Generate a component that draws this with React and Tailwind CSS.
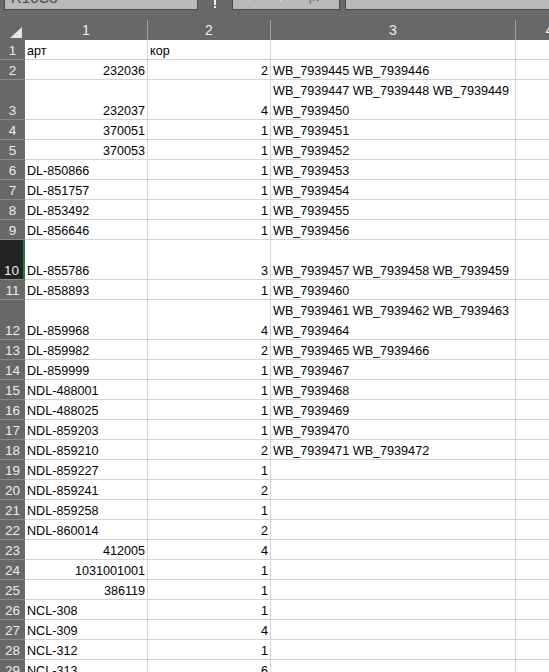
import React from "react";

// Column widths (px) after the 25px row-number gutter
const COLS = [123, 123, 245, 68];
const COL_W = ["w-[123px]", "w-[123px]", "w-[245px]", "w-[68px]"];

// Sheet rows: article, its alignment, box count, id lines, height in 20px units
const ROWS = [
  { a: "арт", ar: false, k: "кор", w: [] },
  { a: "232036", ar: true, k: "2", w: ["WB_7939445 WB_7939446"] },
  { a: "232037", ar: true, k: "4", w: ["WB_7939447 WB_7939448 WB_7939449", "WB_7939450"], h: 2 },
  { a: "370051", ar: true, k: "1", w: ["WB_7939451"] },
  { a: "370053", ar: true, k: "1", w: ["WB_7939452"] },
  { a: "DL-850866", k: "1", w: ["WB_7939453"] },
  { a: "DL-851757", k: "1", w: ["WB_7939454"] },
  { a: "DL-853492", k: "1", w: ["WB_7939455"] },
  { a: "DL-856646", k: "1", w: ["WB_7939456"] },
  { a: "DL-855786", k: "3", w: ["WB_7939457 WB_7939458 WB_7939459"], h: 2, sel: true },
  { a: "DL-858893", k: "1", w: ["WB_7939460"] },
  { a: "DL-859968", k: "4", w: ["WB_7939461 WB_7939462 WB_7939463", "WB_7939464"], h: 2 },
  { a: "DL-859982", k: "2", w: ["WB_7939465 WB_7939466"] },
  { a: "DL-859999", k: "1", w: ["WB_7939467"] },
  { a: "NDL-488001", k: "1", w: ["WB_7939468"] },
  { a: "NDL-488025", k: "1", w: ["WB_7939469"] },
  { a: "NDL-859203", k: "1", w: ["WB_7939470"] },
  { a: "NDL-859210", k: "2", w: ["WB_7939471 WB_7939472"] },
  { a: "NDL-859227", k: "1", w: [] },
  { a: "NDL-859241", k: "2", w: [] },
  { a: "NDL-859258", k: "1", w: [] },
  { a: "NDL-860014", k: "2", w: [] },
  { a: "412005", ar: true, k: "4", w: [] },
  { a: "1031001001", ar: true, k: "1", w: [] },
  { a: "386119", ar: true, k: "1", w: [] },
  { a: "NCL-308", k: "1", w: [] },
  { a: "NCL-309", k: "4", w: [] },
  { a: "NCL-312", k: "1", w: [] },
  { a: "NCL-313", k: "6", w: [] },
];

function Lines({ lines, right }) {
  return (
    <div className={`flex h-full flex-col justify-end ${right ? "items-end pr-[2px]" : "items-start pl-[2px]"}`}>
      {lines.map((t, i) => (
        <div key={i} className="flex h-5 shrink-0 items-end whitespace-nowrap leading-[16px]">
          {t}
        </div>
      ))}
    </div>
  );
}

function Cell({ col, lines = [], right, tall }) {
  return (
    <div
      className={`${COL_W[col]} ${tall ? "h-10" : "h-5"} shrink-0 border-b border-r border-[#d4d4d4] bg-white`}
    >
      {lines.length > 0 && <Lines lines={lines} right={right} />}
    </div>
  );
}

function TopStrip() {
  return (
    <div className="flex h-5 items-start bg-[#686868]">
      <div className="ml-[4px] h-[10px] w-[194px] overflow-hidden border-x border-b border-[#4a4a4a] bg-[#b9b9b9]">
        <div className="mt-[-9px] pl-[6px] text-[15px] leading-[14px] text-[#4d4d4d]">R10C3</div>
      </div>
      <div className="flex h-[10px] w-[34px] justify-center">
        <div className="flex flex-col items-center">
          <div className="h-[5px] w-[2px] bg-[#f2f2f2]" />
          <div className="mt-[1px] h-[2px] w-[2px] bg-[#f2f2f2]" />
        </div>
      </div>
      <div className="flex h-[10px] w-[108px] items-start overflow-hidden border-x border-b border-[#4a4a4a] bg-[#b9b9b9]">
        <div className="ml-[10px] mt-[-9px] text-[14px] leading-[14px] text-[#d8d8d8]">×</div>
        <div className="ml-[26px] mt-[-9px] text-[14px] leading-[14px] text-[#d8d8d8]">✓</div>
        <div className="ml-[20px] mt-[-10px] font-['Liberation_Serif',serif] text-[14px] italic leading-[14px] text-[#6a6a6a]">fx</div>
      </div>
      <div className="ml-[5px] h-[10px] flex-1 border-b border-l border-[#4a4a4a] bg-[#b9b9b9]" />
    </div>
  );
}

function HeaderRow() {
  return (
    <div className="flex h-5 bg-[#686868] text-[14px] text-[#f0f0f0]">
      <div className="flex h-5 w-[25px] shrink-0 items-end justify-end pb-[2px] pr-[3px]">
        <svg width="12" height="11" viewBox="0 0 12 11">
          <polygon points="12,0 12,11 0,11" fill="#e6e6e6" />
        </svg>
      </div>
      {COLS.map((_, i) => (
        <div
          key={i}
          className={`${COL_W[i]} flex h-5 shrink-0 items-center justify-center border-r border-[#a3a3a3] leading-[16px]`}
        >
          {i + 1}
        </div>
      ))}
    </div>
  );
}

function Row({ n, row }) {
  const tall = row.h === 2;
  return (
    <div className="flex">
      <div
        className={`${tall ? "h-10" : "h-5"} w-[25px] shrink-0 border-b ${
          row.sel
            ? "border-[#8a8a8a] border-r-2 border-r-[#1f7a4d] bg-[#232323]"
            : "border-[#898989] bg-[#686868]"
        } flex items-end justify-center text-[13.5px] leading-[16px] text-[#ececec]`}
      >
        {n}
      </div>
      <Cell col={0} lines={[row.a]} right={row.ar} tall={tall} />
      <Cell col={1} lines={[row.k]} right={row.k !== "кор"} tall={tall} />
      <Cell col={2} lines={row.w} tall={tall} />
      <Cell col={3} tall={tall} />
    </div>
  );
}

export default function App() {
  return (
    <div className="h-[672px] w-[549px] overflow-hidden bg-white font-['Liberation_Sans',Arial,sans-serif] text-[12.6px] text-black">
      <TopStrip />
      <HeaderRow />
      {ROWS.map((row, i) => (
        <Row key={i} n={i + 1} row={row} />
      ))}
    </div>
  );
}
